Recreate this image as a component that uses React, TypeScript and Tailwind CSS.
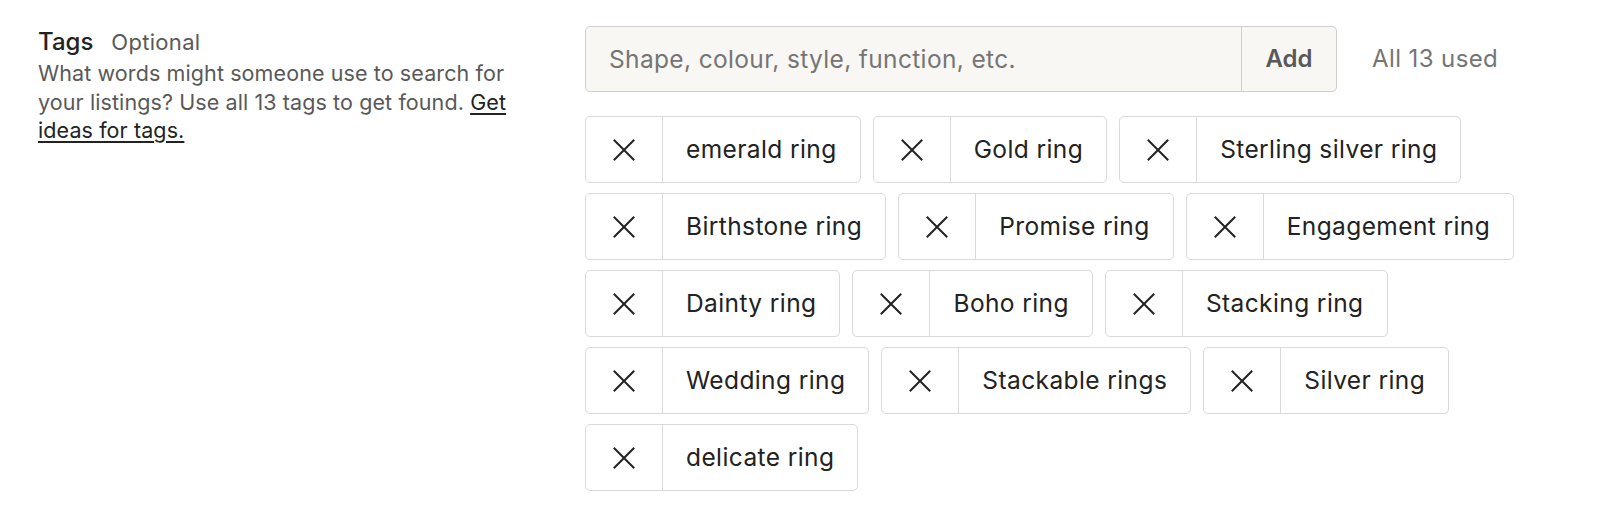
const TAGS = [
  "emerald ring",
  "Gold ring",
  "Sterling silver ring",
  "Birthstone ring",
  "Promise ring",
  "Engagement ring",
  "Dainty ring",
  "Boho ring",
  "Stacking ring",
  "Wedding ring",
  "Stackable rings",
  "Silver ring",
  "delicate ring",
];

function CloseIcon() {
  return (
    <svg width="22" height="22" viewBox="0 0 22 22" fill="none">
      <path
        d="M1.5 1.5 L20.5 20.5 M20.5 1.5 L1.5 20.5"
        stroke="#222222"
        strokeWidth="2"
        strokeLinecap="square"
      />
    </svg>
  );
}

function Tag({ label }: { label: string }) {
  return (
    <div className="flex h-[67px] rounded-[5px] border border-[#d9d9d9] bg-white">
      <button className="flex w-[77px] items-center justify-center border-r border-[#d9d9d9]">
        <CloseIcon />
      </button>
      <span className="flex items-center px-[23px] text-[24.5px] tracking-[0.4px] text-[#222222]">
        {label}
      </span>
    </div>
  );
}

export default function App() {
  return (
    <div
      className="flex min-h-[514px] bg-white pt-[26px] pl-[38px]"
      style={{ fontFamily: "Inter, 'Noto Sans', sans-serif" }}
    >
      <div className="-mt-[2px] w-[480px] shrink-0">
        <div className="flex items-baseline gap-[18px]">
          <h2 className="text-[24px] font-medium text-[#222222]">Tags</h2>
          <span className="text-[22px] tracking-[0.3px] text-[#595959]">
            Optional
          </span>
        </div>
        <p className="-mt-[1px] text-[21.5px] leading-[28.5px] tracking-[0.1px] text-[#595959]">
          What words might someone use to search for your listings? Use all
          13 tags to get found.{" "}
          <a className="text-[#222222] underline underline-offset-[3px]">
            Get ideas for tags.
          </a>
        </p>
      </div>

      <div className="ml-[67px] w-[1000px]">
        <div className="flex items-center gap-[35px]">
          <div className="flex h-[66px] w-[752px] rounded-[5px] border border-[#cfcfcf] bg-[#f8f7f4]">
            <input
              className="min-w-0 flex-1 bg-transparent px-[23px] text-[24.5px] tracking-[0.35px] text-[#222222] outline-none placeholder:text-[#757575]"
              placeholder="Shape, colour, style, function, etc."
            />
            <button className="w-[95px] border-l border-[#cfcfcf] text-[24px] font-semibold text-[#595959]">
              Add
            </button>
          </div>
          <span className="text-[24px] tracking-[0.4px] text-[#757575]">
            All 13 used
          </span>
        </div>

        <div className="mt-[24px] flex flex-wrap gap-x-[12px] gap-y-[10px]">
          {TAGS.map((t) => (
            <Tag key={t} label={t} />
          ))}
        </div>
      </div>
    </div>
  );
}
